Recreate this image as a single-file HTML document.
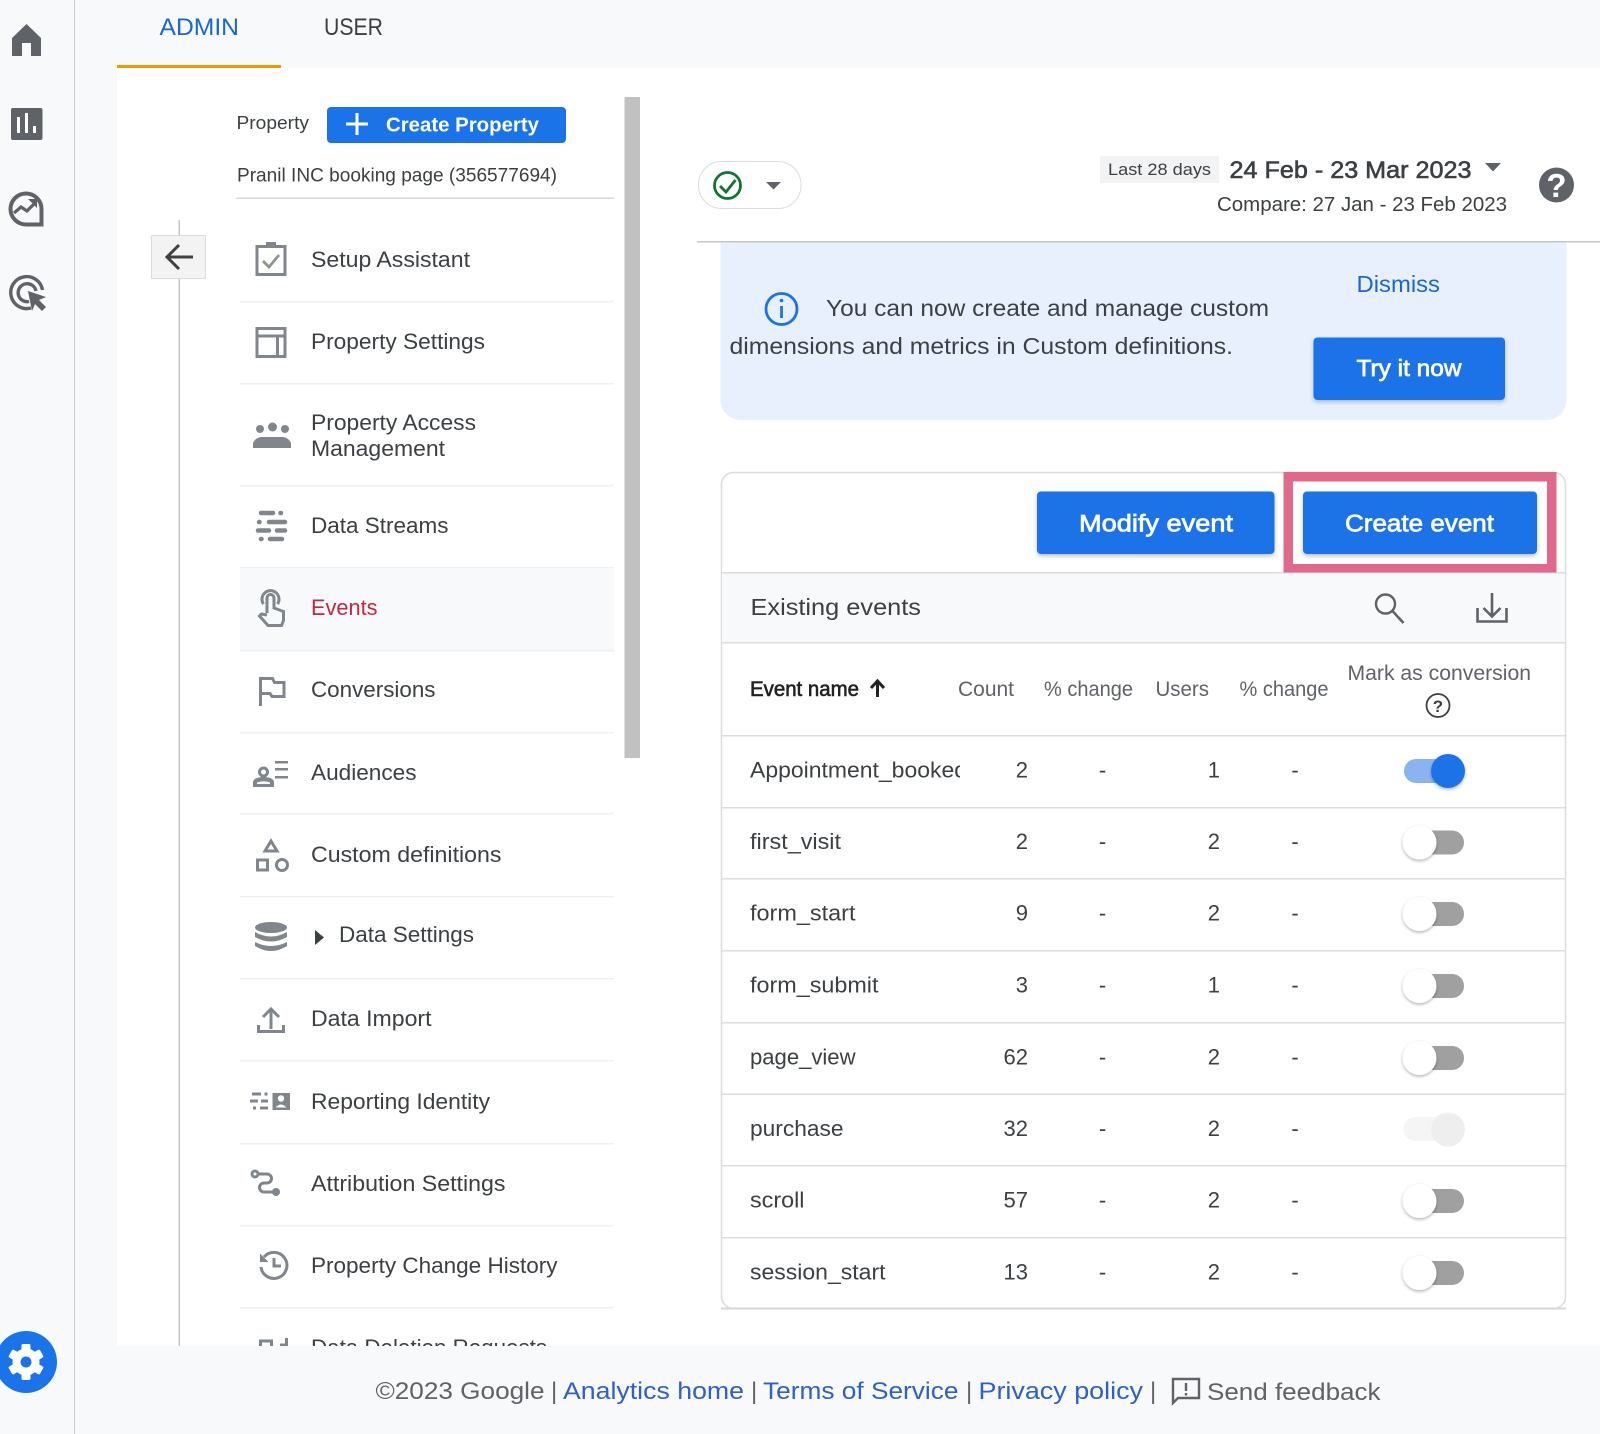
<!DOCTYPE html>
<html lang="en"><head><meta charset="utf-8"><title>Events - Admin</title>
<style>
html,body{margin:0;padding:0;background:#fff;width:1600px;height:1434px;overflow:hidden}
svg{display:block;filter:blur(.35px)}
text{font-family:"Liberation Sans",sans-serif;fill:#3c4043}
.s{font-size:22px}
.m{stroke:currentColor;stroke-width:.6px}
.w{fill:#fff;color:#fff;stroke:#fff;stroke-width:.7px}
.i{fill:none;stroke:#80868b;stroke-width:3}
.g{fill:#80868b}
.h{fill:#3c4043;font-size:21px}
.n{font-size:22px;text-anchor:end}
.d{font-size:22px;text-anchor:middle}
</style></head><body>
<svg width="1600" height="1434" viewBox="0 0 1600 1434" xmlns="http://www.w3.org/2000/svg">
<defs>
<filter id="sh" x="-20%" y="-20%" width="140%" height="150%"><feDropShadow dx="0" dy="2" stdDeviation="2" flood-color="#3c4043" flood-opacity=".35"/></filter>
<filter id="ks" x="-40%" y="-40%" width="180%" height="190%"><feDropShadow dx="0" dy="1.5" stdDeviation="1.5" flood-color="#000" flood-opacity=".3"/></filter>
<clipPath id="ap"><rect x="745" y="750" width="215" height="40"/></clipPath>
</defs>
<rect width="1600" height="1434" fill="#f8f9fa"/>
<rect x="117" y="68" width="1483" height="1278" fill="#fff"/>
<rect x="74" y="0" width="1" height="1434" fill="#c9cbce"/>

<!-- rail -->
<path d="M26.5 24L41 38V56H31V43H22V56H12V38Z" fill="#5f6368"/>
<rect x="11" y="108" width="31.5" height="32" rx="2" fill="#5f6368"/>
<path d="M17 117h3v16h-3zM25 113h3v20h-3zM33 126h3v7h-3z" fill="#fff"/>
<path d="M26 193.500A15.500 15.500 0 0 1 41.500 209V224.500H26A15.500 15.500 0 0 1 26 193.500z" fill="none" stroke="#5f6368" stroke-width="4"/>
<path d="M14 213l7-6 6 4 8-8" fill="none" stroke="#5f6368" stroke-width="3.200"/>
<path d="M28 199h9v9z" fill="#5f6368"/>
<path d="M42.500 290A16 16 0 1 0 31 308" fill="none" stroke="#5f6368" stroke-width="3.400"/>
<path d="M36 291A9 9 0 1 0 29 301.500" fill="none" stroke="#5f6368" stroke-width="3.400"/>
<path d="M28 291l18 6-7 3 7 7-4 4-7-7-3 7z" fill="#5f6368"/>

<!-- tabs -->
<text x="159.500" y="35" font-size="24" textLength="79.500" lengthAdjust="spacingAndGlyphs" style="fill:#1a67d2">ADMIN</text>
<text x="324" y="35" font-size="24" textLength="59" lengthAdjust="spacingAndGlyphs">USER</text>
<rect x="117" y="65" width="164" height="3" fill="#f29900"/>

<!-- property column -->
<text x="236.500" y="129" font-size="18" textLength="72.500" lengthAdjust="spacingAndGlyphs">Property</text>
<rect x="327" y="107" width="239" height="36" rx="4" fill="#1a73e8"/>
<path d="M357 113v22M346 124h22" stroke="#fff" stroke-width="3" fill="none"/>
<text x="386" y="131.500" font-size="20" font-weight="bold" style="fill:#fff" textLength="153" lengthAdjust="spacingAndGlyphs">Create Property</text>
<text x="237" y="181.500" font-size="19" textLength="320" lengthAdjust="spacingAndGlyphs">Pranil INC booking page (356577694)</text>
<rect x="236" y="197.500" width="378" height="1.500" fill="#d5d7da"/>
<rect x="178.500" y="220" width="1.500" height="1126" fill="#c8c8c8"/>
<rect x="151.500" y="235.500" width="54" height="43" rx="1" fill="#f3f3f3" stroke="#dcdcdc"/>
<path d="M193 257H167M179 245l-12 12 12 12" fill="none" stroke="#3c4043" stroke-width="3"/>
<rect x="624.500" y="97" width="15.500" height="661" fill="#c1c1c1"/>

<!-- menu separators -->
<g fill="#eff0f1">
<rect x="240" y="301" width="374" height="1.500"/><rect x="240" y="383" width="374" height="1.500"/><rect x="240" y="485" width="374" height="1.500"/><rect x="240" y="567" width="374" height="1.500"/><rect x="240" y="650" width="374" height="1.500"/><rect x="240" y="732" width="374" height="1.500"/><rect x="240" y="813" width="374" height="1.500"/><rect x="240" y="896" width="374" height="1.500"/><rect x="240" y="978" width="374" height="1.500"/><rect x="240" y="1060" width="374" height="1.500"/><rect x="240" y="1143" width="374" height="1.500"/><rect x="240" y="1225" width="374" height="1.500"/><rect x="240" y="1307" width="374" height="1.500"/>
</g>
<rect x="240" y="568" width="374" height="82" fill="#f8f9fa"/>

<!-- menu text -->
<text class="s" x="311" y="267" textLength="159" lengthAdjust="spacingAndGlyphs">Setup Assistant</text>
<text class="s" x="311" y="349" textLength="174" lengthAdjust="spacingAndGlyphs">Property Settings</text>
<text class="s" x="311" y="430" textLength="165" lengthAdjust="spacingAndGlyphs">Property Access</text>
<text class="s" x="311" y="456" textLength="134" lengthAdjust="spacingAndGlyphs">Management</text>
<text class="s" x="311" y="533" textLength="137.500" lengthAdjust="spacingAndGlyphs">Data Streams</text>
<text class="s" x="311" y="615" textLength="66.500" lengthAdjust="spacingAndGlyphs" style="fill:#c5283d">Events</text>
<text class="s" x="311" y="697" textLength="124.500" lengthAdjust="spacingAndGlyphs">Conversions</text>
<text class="s" x="311" y="780" textLength="105.500" lengthAdjust="spacingAndGlyphs">Audiences</text>
<text class="s" x="311" y="862" textLength="190.500" lengthAdjust="spacingAndGlyphs">Custom definitions</text>
<text class="s" x="339" y="942" textLength="135" lengthAdjust="spacingAndGlyphs">Data Settings</text>
<text class="s" x="311" y="1026" textLength="120.500" lengthAdjust="spacingAndGlyphs">Data Import</text>
<text class="s" x="311" y="1109" textLength="179" lengthAdjust="spacingAndGlyphs">Reporting Identity</text>
<text class="s" x="311" y="1191" textLength="194.500" lengthAdjust="spacingAndGlyphs">Attribution Settings</text>
<text class="s" x="311" y="1273" textLength="246.500" lengthAdjust="spacingAndGlyphs">Property Change History</text>
<text class="s" x="311" y="1355" textLength="236" lengthAdjust="spacingAndGlyphs">Data Deletion Requests</text>

<!-- menu icons -->
<rect class="i" x="257" y="246.500" width="28" height="28"/>
<rect class="g" x="266" y="242" width="10" height="6"/>
<path d="M263 261l6 6 10-12" fill="none" stroke="#8f9296" stroke-width="2.800"/>
<rect class="i" x="257" y="328.500" width="28" height="28"/>
<path class="i" d="M257 336h28M277.500 336v20" stroke-width="2.500"/>
<circle class="g" cx="260" cy="429" r="4"/><circle class="g" cx="272.500" cy="427" r="4.500"/><circle class="g" cx="285" cy="429" r="4"/>
<path class="g" d="M253 448v-5q2-5 8-6h22q6 1 8 6v5z"/>
<g fill="none" stroke="#80868b" stroke-width="4.500" stroke-linecap="round">
<path d="M261 513h12M280.500 513h.5M259 522h.5M269 522h16M258 530.500h11M277 530.500h8M261 539h.5M270 539h12"/>
</g>
<path class="i" d="M263.500 604a8.500 8.500 0 1 1 14 0"/>
<path class="i" d="M267 613V598a3.500 3.500 0 0 1 7 0V608l9.500 3.500v9l-2 5H268L259.500 616l2-2 5.500 1"/>
<path class="i" d="M260.500 706V678.500h12l2 4h9.500v14h-12l-2-3h-9.500"/>
<circle class="i" cx="263.500" cy="772" r="4" stroke-width="2.500"/>
<path class="g" d="M253 787v-5q1-5 10.500-5t10.500 5v5zM257 782.500v1.500h13v-1.500q-6-2.500-13 0z" fill-rule="evenodd"/>
<path class="g" d="M275 761h13v2.500h-13zM275 768h13v2.500h-13zM275 776h13v2.500h-13z"/>
<path class="i" d="M271 841l6 10h-12z" stroke-width="3"/>
<rect class="i" x="257.500" y="860" width="10" height="10" stroke-width="3"/>
<circle class="i" cx="282" cy="865" r="5.500" stroke-width="3"/>
<ellipse class="g" cx="271" cy="927.500" rx="16" ry="5.500"/>
<path class="g" d="M255 932q16 9 32 0v5q-16 9-32 0zM255 942q16 8 32 0v4q-16 10-32 0z"/>
<path d="M315 930l9 7.500-9 7.500z" fill="#3c4043"/>
<path class="i" d="M258.500 1025v6.500h25V1025M271 1029v-19M263 1017l8-8 8 8"/>
<path class="g" d="M252 1092.500h9v3h-9zM264.500 1092.500h3v3h-3zM250 1099.500h8v3h-8zM261 1099.500h7v3h-7zM253 1106.500h3v3h-3zM260 1106.500h8v3h-8z"/>
<rect class="g" x="272.500" y="1093" width="17.500" height="17"/>
<circle cx="281" cy="1098.500" r="3.200" fill="#fff"/><path d="M275.500 1107.500q5.500-6 11 0z" fill="#fff"/>
<circle class="i" cx="255" cy="1174" r="3" stroke-width="2.200"/>
<path class="i" d="M258 1174H267a4.500 4.500 0 0 1 0 9H264a4.500 4.500 0 0 0 0 9H274" stroke-width="2.800"/>
<circle class="g" cx="276" cy="1192" r="4"/>
<path class="i" d="M264 1257a13 13 0 1 1-3 10" stroke-width="3.200"/>
<path class="g" d="M260 1253.500l8.500 8.500H260z"/>
<path class="i" d="M274 1258v8h7" stroke-width="2.500"/>
<path class="i" d="M260.500 1360V1341h11v19"/>
<path class="i" d="M280 1345h7M286.500 1338v22"/>

<!-- header -->
<rect x="698.500" y="161.500" width="102.500" height="47" rx="23" fill="#fff" stroke="#dadce0"/>
<circle cx="727.500" cy="185.500" r="13" fill="none" stroke="#137333" stroke-width="2.800"/>
<path d="M720 186l6 6 9.500-12" fill="none" stroke="#137333" stroke-width="2.800"/>
<path d="M766 182h15l-7.500 7.500z" fill="#5f6368"/>
<rect x="1100" y="156" width="119" height="27" fill="#f1f3f4"/>
<text x="1108" y="175" font-size="17" textLength="103" lengthAdjust="spacingAndGlyphs">Last 28 days</text>
<text x="1229.500" y="178" font-size="24" class="m" color="#3c4043" textLength="242" lengthAdjust="spacingAndGlyphs">24 Feb - 23 Mar 2023</text>
<path d="M1485 163h16l-8 8.500z" fill="#5f6368"/>
<text x="1217" y="211" font-size="20" textLength="290" lengthAdjust="spacingAndGlyphs">Compare: 27 Jan - 23 Feb 2023</text>
<circle cx="1556.500" cy="185" r="17.500" fill="#5f6368"/>
<text x="1556.500" y="197" font-size="33" text-anchor="middle" font-weight="bold" style="fill:#fff">?</text>

<!-- banner -->
<path d="M720.500 242H1566.500V400a20 20 0 0 1-20 20H740.500a20 20 0 0 1-20-20Z" fill="#e8f0fe"/>
<rect x="697" y="241" width="903" height="1.500" fill="#c4c7cb"/>
<circle cx="781.500" cy="309" r="15.500" fill="none" stroke="#1a73e8" stroke-width="2.800"/>
<path d="M781.500 306v12" stroke="#1a73e8" stroke-width="2.800"/><circle cx="781.500" cy="300.500" r="1.800" fill="#1a73e8"/>
<text x="826" y="316" font-size="23.500" textLength="443" lengthAdjust="spacingAndGlyphs">You can now create and manage custom</text>
<text x="729.500" y="354" font-size="23.500" textLength="503.500" lengthAdjust="spacingAndGlyphs">dimensions and metrics in Custom definitions.</text>
<text x="1356.500" y="292" font-size="23" textLength="83.500" lengthAdjust="spacingAndGlyphs" style="fill:#1a67d2">Dismiss</text>
<rect x="1313.500" y="337.500" width="191.500" height="62.500" rx="4" fill="#1a73e8" filter="url(#sh)"/>
<text x="1356.500" y="376" font-size="23.500" class="w" textLength="105" lengthAdjust="spacingAndGlyphs">Try it now</text>

<!-- card -->
<rect x="721.500" y="472.500" width="844" height="836" rx="12" fill="#fff" stroke="#dadce0" stroke-width="1.500"/>
<rect x="721" y="1307.500" width="845" height="2" fill="#d5d7da"/>
<rect x="722" y="573" width="843" height="69" fill="#f8f9fa"/>
<g fill="#dadce0">
<rect x="721" y="572" width="845" height="1.500"/><rect x="721" y="642" width="845" height="1.500"/><rect x="721" y="735" width="845" height="1.500"/><rect x="721" y="807" width="845" height="1.500"/><rect x="721" y="878" width="845" height="1.500"/><rect x="721" y="950" width="845" height="1.500"/><rect x="721" y="1022" width="845" height="1.500"/><rect x="721" y="1093.500" width="845" height="1.500"/><rect x="721" y="1165" width="845" height="1.500"/><rect x="721" y="1237" width="845" height="1.500"/>
</g>
<path d="M1283.500 472h273v100.500h-273zM1293 481.500v82.500h254v-82.500z" fill="#e0688a" fill-rule="evenodd"/>
<rect x="1037" y="491.500" width="237.500" height="62.500" rx="4" fill="#1a73e8" filter="url(#sh)"/>
<text x="1079" y="531.500" font-size="24" class="w" textLength="154" lengthAdjust="spacingAndGlyphs">Modify event</text>
<rect x="1303" y="491.500" width="234" height="62.500" rx="4" fill="#1a73e8" filter="url(#sh)"/>
<text x="1345" y="531.500" font-size="24" class="w" textLength="149" lengthAdjust="spacingAndGlyphs">Create event</text>

<text x="750.500" y="615" font-size="23" textLength="170.500" lengthAdjust="spacingAndGlyphs">Existing events</text>
<circle cx="1385.500" cy="604" r="9.500" fill="none" stroke="#5f6368" stroke-width="2.400"/>
<path d="M1392.500 611l11 12" stroke="#5f6368" stroke-width="2.600"/>
<path d="M1477.500 608v13.500h29V608M1492 593v23M1483.500 608l8.500 8.500 8.500-8.500" fill="none" stroke="#5f6368" stroke-width="2.600"/>

<!-- table head -->
<text x="750" y="696" class="h m" color="#202124" textLength="109" lengthAdjust="spacingAndGlyphs" style="fill:#202124">Event name</text>
<path d="M877.500 697v-15M871 688l6.500-7 6.500 7" fill="none" stroke="#202124" stroke-width="3"/>
<text x="958" y="696" class="h" textLength="56" lengthAdjust="spacingAndGlyphs" style="fill:#5f6368">Count</text>
<text x="1044" y="696" class="h" textLength="89" lengthAdjust="spacingAndGlyphs" style="fill:#5f6368">% change</text>
<text x="1155.500" y="696" class="h" textLength="53.500" lengthAdjust="spacingAndGlyphs" style="fill:#5f6368">Users</text>
<text x="1239.500" y="696" class="h" textLength="89" lengthAdjust="spacingAndGlyphs" style="fill:#5f6368">% change</text>
<text x="1347.500" y="680" class="h" textLength="183.500" lengthAdjust="spacingAndGlyphs" style="fill:#5f6368">Mark as conversion</text>
<circle cx="1438" cy="705.500" r="11.500" fill="none" stroke="#3c4043" stroke-width="1.800"/>
<text x="1438" y="712" font-size="17" font-weight="bold" text-anchor="middle" style="fill:#3c4043">?</text>

<!-- rows -->
<g clip-path="url(#ap)"><text x="750" y="777.500" class="s" textLength="217" lengthAdjust="spacingAndGlyphs">Appointment_booked</text></g>
<text x="750" y="849" class="s" textLength="91" lengthAdjust="spacingAndGlyphs">first_visit</text>
<text x="750" y="920.500" class="s" textLength="105.500" lengthAdjust="spacingAndGlyphs">form_start</text>
<text x="750" y="992.500" class="s" textLength="128.500" lengthAdjust="spacingAndGlyphs">form_submit</text>
<text x="750" y="1064.500" class="s" textLength="105.500" lengthAdjust="spacingAndGlyphs">page_view</text>
<text x="750" y="1136" class="s" textLength="93.500" lengthAdjust="spacingAndGlyphs">purchase</text>
<text x="750" y="1207.500" class="s" textLength="54.500" lengthAdjust="spacingAndGlyphs">scroll</text>
<text x="750" y="1279.500" class="s" textLength="135.500" lengthAdjust="spacingAndGlyphs">session_start</text>

<g class="nums">
<text class="n" x="1028" y="777.500">2</text><text class="n" x="1028" y="849">2</text><text class="n" x="1028" y="920.500">9</text><text class="n" x="1028" y="992.500">3</text><text class="n" x="1028" y="1064.500">62</text><text class="n" x="1028" y="1136">32</text><text class="n" x="1028" y="1207.500">57</text><text class="n" x="1028" y="1279.500">13</text>
<text class="n" x="1220" y="777.500">1</text><text class="n" x="1220" y="849">2</text><text class="n" x="1220" y="920.500">2</text><text class="n" x="1220" y="992.500">1</text><text class="n" x="1220" y="1064.500">2</text><text class="n" x="1220" y="1136">2</text><text class="n" x="1220" y="1207.500">2</text><text class="n" x="1220" y="1279.500">2</text>
<text class="d" x="1102.500" y="777.500">-</text><text class="d" x="1102.500" y="849">-</text><text class="d" x="1102.500" y="920.500">-</text><text class="d" x="1102.500" y="992.500">-</text><text class="d" x="1102.500" y="1064.500">-</text><text class="d" x="1102.500" y="1136">-</text><text class="d" x="1102.500" y="1207.500">-</text><text class="d" x="1102.500" y="1279.500">-</text>
<text class="d" x="1295" y="777.500">-</text><text class="d" x="1295" y="849">-</text><text class="d" x="1295" y="920.500">-</text><text class="d" x="1295" y="992.500">-</text><text class="d" x="1295" y="1064.500">-</text><text class="d" x="1295" y="1136">-</text><text class="d" x="1295" y="1207.500">-</text><text class="d" x="1295" y="1279.500">-</text>
</g>

<!-- toggles -->
<rect x="1404" y="759" width="58" height="24" rx="12" fill="#8ab4f0"/><circle cx="1448" cy="771" r="17" fill="#1a73e8" filter="url(#ks)"/>
<g fill="#a0a0a0"><rect x="1404.500" y="830.500" width="59.500" height="24" rx="12"/><rect x="1404.500" y="902" width="59.500" height="24" rx="12"/><rect x="1404.500" y="974" width="59.500" height="24" rx="12"/><rect x="1404.500" y="1046" width="59.500" height="24" rx="12"/><rect x="1404.500" y="1189" width="59.500" height="24" rx="12"/><rect x="1404.500" y="1261" width="59.500" height="24" rx="12"/></g>
<g fill="#fff" filter="url(#ks)"><circle cx="1419.500" cy="842.500" r="17"/><circle cx="1419.500" cy="914" r="17"/><circle cx="1419.500" cy="986" r="17"/><circle cx="1419.500" cy="1058" r="17"/><circle cx="1419.500" cy="1201" r="17"/><circle cx="1419.500" cy="1273" r="17"/></g>
<rect x="1403.500" y="1117" width="60" height="24" rx="12" fill="#f5f5f5"/><circle cx="1448" cy="1129.500" r="17" fill="#eeeeee"/>

<!-- footer -->
<rect x="75" y="1346" width="1525" height="88" fill="#f8f9fa"/>
<text x="375.500" y="1399" font-size="24" textLength="169" lengthAdjust="spacingAndGlyphs" style="fill:#5f6368">©2023 Google</text>
<text x="551" y="1399" font-size="24" style="fill:#5f6368">|</text>
<text x="563" y="1399" font-size="24" textLength="181" lengthAdjust="spacingAndGlyphs" style="fill:#2f5fc8">Analytics home</text>
<text x="751" y="1399" font-size="24" style="fill:#5f6368">|</text>
<text x="763" y="1399" font-size="24" textLength="195.500" lengthAdjust="spacingAndGlyphs" style="fill:#2f5fc8">Terms of Service</text>
<text x="966" y="1399" font-size="24" style="fill:#5f6368">|</text>
<text x="978.500" y="1399" font-size="24" textLength="164.500" lengthAdjust="spacingAndGlyphs" style="fill:#2f5fc8">Privacy policy</text>
<text x="1150" y="1399" font-size="24" style="fill:#5f6368">|</text>
<path d="M1173 1379h26v19h-21l-5 5z" fill="none" stroke="#5f6368" stroke-width="2.400"/>
<path d="M1186 1383v8M1186 1393v2.500" stroke="#5f6368" stroke-width="2.400"/>
<text x="1207" y="1400" font-size="24" textLength="173.500" lengthAdjust="spacingAndGlyphs" style="fill:#5f6368">Send feedback</text>
<circle cx="26" cy="1362" r="31" fill="#1a73e8"/>
<g transform="translate(26 1362)"><circle r="13.500" fill="#fff"/><g fill="#fff"><rect x="-4.500" y="-18" width="9" height="36" rx="1.500"/><rect x="-4.500" y="-18" width="9" height="36" rx="1.500" transform="rotate(60)"/><rect x="-4.500" y="-18" width="9" height="36" rx="1.500" transform="rotate(120)"/></g><circle r="5.500" fill="#1a73e8"/></g>
</svg>
</body></html>
